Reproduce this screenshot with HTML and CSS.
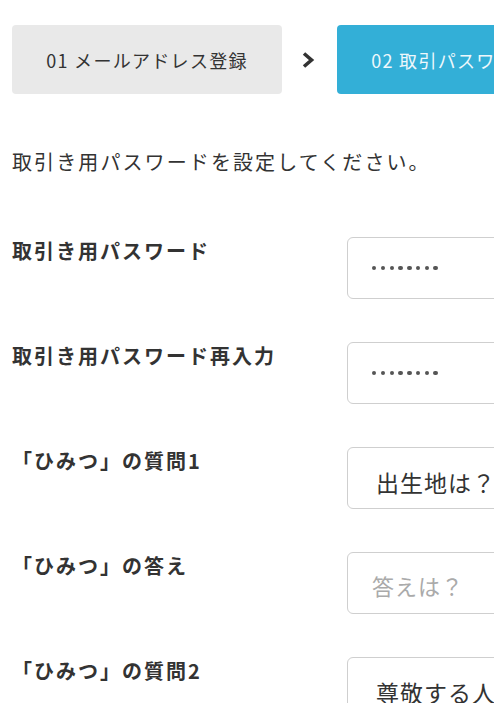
FILE: index.html
```html
<!DOCTYPE html>
<html lang="ja">
<head>
    <meta charset="UTF-8">
    <meta name="viewport" content="width=device-width, initial-scale=1.0">
    <title>取引パスワード設定</title>
    <link rel="stylesheet" href="styles.css">
</head>
<body>
    <div class="page">
        <div class="steps">
            <div class="step">01 メールアドレス登録</div>
            <div class="step-arrow">
                <svg width="14" height="18" viewBox="0 0 14 18"><path d="M3 2.5 L10.5 9 L3 15.5" fill="none" stroke="#333" stroke-width="3.6" stroke-linejoin="miter"/></svg>
            </div>
            <div class="step step-active">02 取引パスワード設定</div>
        </div>

        <p class="intro">取引き用パスワードを設定してください。</p>

        <div class="form-row">
            <div class="label">取引き用パスワード</div>
            <div class="field"><span class="dots"><i></i><i></i><i></i><i></i><i></i><i></i><i></i><i></i></span></div>
        </div>
        <div class="form-row">
            <div class="label">取引き用パスワード再入力</div>
            <div class="field"><span class="dots"><i></i><i></i><i></i><i></i><i></i><i></i><i></i><i></i></span></div>
        </div>
        <div class="form-row">
            <div class="label">「ひみつ」の質問1</div>
            <div class="field select">出生地は？</div>
        </div>
        <div class="form-row">
            <div class="label">「ひみつ」の答え</div>
            <div class="field placeholder">答えは？</div>
        </div>
        <div class="form-row">
            <div class="label">「ひみつ」の質問2</div>
            <div class="field select">尊敬する人は？</div>
        </div>
    </div>
</body>
</html>
```

FILE: styles.css
```css
body {
    margin: 0;
    font-family: "Noto Sans CJK JP", "Noto Sans", sans-serif;
    color: #333;
    background: #fff;
    overflow: hidden;
}
.page {
    padding: 25px 0 0 12px;
    width: 700px;
}
.steps {
    display: flex;
    align-items: center;
}
.step {
    flex: 0 0 270px;
    height: 69px;
    display: flex;
    align-items: center;
    justify-content: center;
    background: #e9e9e9;
    border-radius: 4px;
    font-size: 18px;
    letter-spacing: 1.3px;
    color: #333;
}
.step-active {
    background: #33afd7;
    color: #eef8fc;
}
.step-arrow {
    flex: 0 0 55px;
    display: flex;
    justify-content: center;
    padding-right: 4px;
    box-sizing: border-box;
}
.step-arrow svg {
    display: block;
}
.intro {
    margin: 53px 0 0;
    font-size: 20px;
    line-height: 30px;
    letter-spacing: 2.1px;
}
.form-row {
    display: flex;
    align-items: flex-start;
    margin-top: 43px;
}
.intro + .form-row {
    margin-top: 60px;
}
.label {
    flex: 0 0 335px;
    font-size: 20px;
    font-weight: bold;
    line-height: 28px;
    letter-spacing: 2px;
}
.field {
    flex: 0 0 300px;
    height: 62px;
    box-sizing: border-box;
    border: 1px solid #cfcfcf;
    border-radius: 6px;
    display: flex;
    align-items: center;
    padding-left: 24px;
    font-size: 20px;
    letter-spacing: 1px;
}
.dots {
    display: flex;
    gap: 4.4px;
}
.dots i {
    width: 4.4px;
    height: 4.4px;
    border-radius: 50%;
    background: #555;
}
.select {
    padding-left: 28px;
    padding-top: 8px;
    font-size: 23px;
    color: #333;
}
.placeholder {
    padding-top: 3px;
    font-size: 22px;
    color: #aaa;
}
```
